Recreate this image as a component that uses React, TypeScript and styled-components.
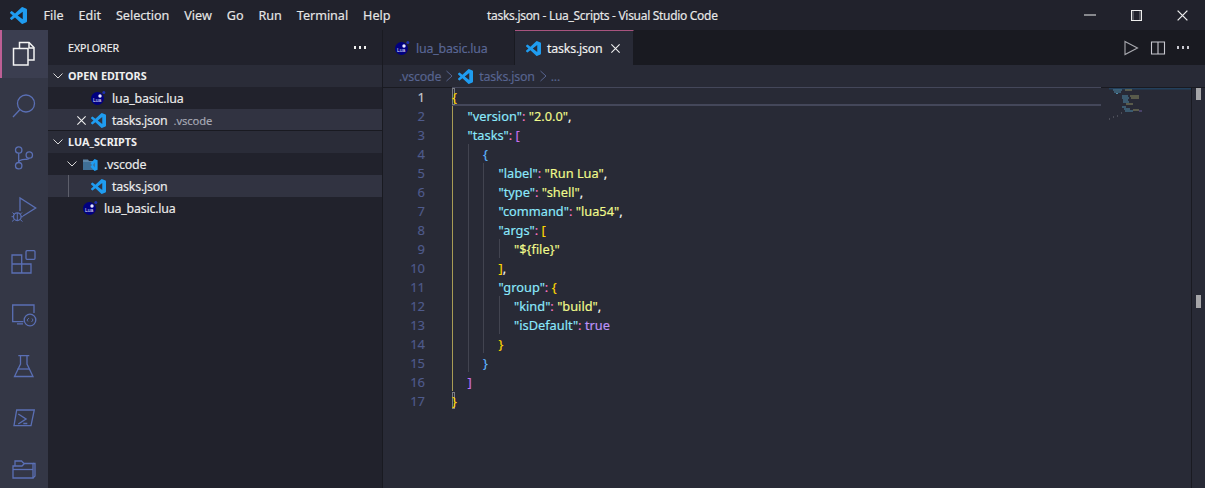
import React from "react";
import styled, { createGlobalStyle } from "styled-components";

const UI_FONT = `"Noto Sans", "Open Sans", sans-serif`;
const ICON_BLUE = "#5a6fb4";

const GlobalStyle = createGlobalStyle`
  html, body { margin: 0; padding: 0; height: 100%; background: #282a36; overflow: hidden; }
  #root { height: 100%; }
  * { box-sizing: border-box; }
`;

const Window = styled.div`
  width: 1205px;
  height: 488px;
  display: flex;
  flex-direction: column;
  font-family: ${UI_FONT};
  font-size: 13px;
  color: #f8f8f2;
  overflow: hidden;
  -webkit-text-stroke: 0.15px;
`;

const TitleBar = styled.header`
  height: 30px;
  flex: none;
  display: flex;
  align-items: center;
  background: #21222c;
  position: relative;
`;

const TitleLogo = styled.div`
  width: 36px;
  display: flex;
  justify-content: center;
`;

const Menu = styled.nav`
  display: flex;
`;

const MenuItem = styled.div`
  padding: 0 7.5px;
  font-size: 12.6px;
  letter-spacing: -0.03px;
  color: #e6e6e6;
`;

const WindowTitle = styled.div`
  position: absolute;
  left: 487px;
  font-size: 12px;
  letter-spacing: -0.3px;
  color: #e8e8e8;
  white-space: nowrap;
`;

const WindowControls = styled.div`
  margin-left: auto;
  display: flex;
`;

const WindowButton = styled.div`
  width: 46px;
  height: 30px;
  display: flex;
  align-items: center;
  justify-content: center;
`;

const Body = styled.div`
  flex: 1;
  display: flex;
  min-height: 0;
`;

const ActivityBar = styled.aside`
  width: 48px;
  flex: none;
  background: #343746;
  display: flex;
  flex-direction: column;
  gap: 4px;
  overflow: hidden;
`;

const ActivityItem = styled.div<{ $active?: boolean }>`
  height: 48px;
  flex: none;
  display: flex;
  align-items: center;
  justify-content: center;
  background: ${(p) => (p.$active ? "#3b3e50" : "transparent")};
  border-left: 2px solid ${(p) => (p.$active ? "#bd5f95" : "transparent")};
  padding-right: 2px;
`;

const SideBar = styled.aside`
  width: 335px;
  flex: none;
  background: #21222c;
  border-right: 1px solid #191a21;
  display: flex;
  flex-direction: column;
`;

const SideHeader = styled.div`
  height: 35px;
  flex: none;
  display: flex;
  align-items: center;
  justify-content: space-between;
  padding: 0 16px 0 20px;
  font-size: 10.6px;
  color: #f0f0f0;
`;

const Dots = styled.div`
  display: flex;
  gap: 2.5px;
`;

const Dot = styled.span<{ $color?: string }>`
  width: 2.5px;
  height: 2.5px;
  background: ${(p) => p.$color ?? "#f0f0f0"};
`;

const SectionHeader = styled.div`
  height: 22px;
  display: flex;
  align-items: center;
  background: #2a2c38;
  font-size: 10.8px;
  font-weight: 700;
  color: #f0f0f0;
  padding: 0 0 1px 4px;
  gap: 4px;
  -webkit-text-stroke: 0;
`;

const Row = styled.div<{ $indent: number; $selected?: boolean; $rule?: boolean }>`
  height: 22px;
  display: flex;
  align-items: center;
  position: relative;
  padding-left: ${(p) => p.$indent}px;
  background: ${(p) => (p.$selected ? "#313341" : "transparent")};
  box-shadow: ${(p) => (p.$rule ? "inset 0 -1px 0 #191a21" : "none")};
  white-space: nowrap;
`;

const RowLabel = styled.span`
  margin-left: 6px;
  font-size: 12.4px;
  letter-spacing: -0.2px;
  color: #ebebeb;
`;

const RowHint = styled.span`
  margin-left: 6px;
  font-size: 11.2px;
  letter-spacing: -0.1px;
  color: #a6a8b4;
`;

const TreeGuide = styled.span`
  position: absolute;
  left: 20px;
  top: 0;
  bottom: 0;
  width: 1px;
  background: #5d5f6b;
`;

const CloseSlot = styled.span`
  width: 18px;
  display: flex;
  justify-content: center;
  margin-right: 1px;
`;

const Twist = styled.span`
  width: 18px;
  display: flex;
  justify-content: center;
  padding-right: 2px;
`;

const EditorArea = styled.main`
  flex: 1;
  display: flex;
  flex-direction: column;
  background: #282a36;
  min-width: 0;
`;

const TabBar = styled.div`
  height: 35px;
  flex: none;
  display: flex;
  background: #191a21;
`;

const Tab = styled.div<{ $active?: boolean; $width: number }>`
  width: ${(p) => p.$width}px;
  height: 35px;
  display: flex;
  align-items: center;
  padding-left: 11px;
  background: ${(p) => (p.$active ? "#282a36" : "#21222c")};
  border-top: 1px solid ${(p) => (p.$active ? "#a8547f" : "transparent")};
  border-right: 1px solid #191a21;
`;

const TabLabel = styled.span<{ $active?: boolean }>`
  margin-left: 6px;
  font-size: 12.4px;
  letter-spacing: -0.2px;
  color: ${(p) => (p.$active ? "#f0f0f0" : "#5a6796")};
`;

const TabClose = styled.span<{ $width: number }>`
  width: ${(p) => p.$width}px;
  display: flex;
  justify-content: center;
`;

const TabActions = styled.div`
  margin-left: auto;
  display: flex;
  align-items: center;
  gap: 11px;
  padding-right: 16px;
`;

const Breadcrumbs = styled.div`
  height: 22px;
  flex: none;
  display: flex;
  align-items: center;
  padding-left: 16px;
  gap: 3px;
  font-size: 12.4px;
  letter-spacing: -0.2px;
  color: #57648f;
  box-shadow: 0 1px 0 #191a21;
`;

const CrumbIcon = styled.span`
  display: flex;
  margin: 0 3px 0 1px;
`;

const Code = styled.div`
  flex: 1;
  position: relative;
  min-height: 0;
`;

const Line = styled.div`
  height: 19px;
  display: flex;
  align-items: center;
  font-size: 12.8px;
  white-space: pre;
  position: relative;
`;

const CurrentLine = styled.span`
  position: absolute;
  left: 69px;
  top: 0;
  width: 649px;
  height: 19px;
  border-top: 1px solid #44475a;
  border-bottom: 2px solid #44475a;
`;

const LineNumber = styled.span<{ $current?: boolean }>`
  width: 42px;
  text-align: right;
  flex: none;
  font-size: 13px;
  color: ${(p) => (p.$current ? "#c9cad0" : "#4f5b8c")};
  margin-right: 27px;
`;

const Guide = styled.span<{ $active?: boolean }>`
  display: block;
  flex: none;
  width: 15.5px;
  height: 19px;
  border-left: 1px solid ${(p) => (p.$active ? "#a89c55" : "#424450")};
`;

const Tok = styled.span<{ $c: string }>`
  position: relative;
  color: ${(p) => p.$c};
`;

const Cursor = styled.span`
  position: absolute;
  left: 69px;
  top: 1px;
  width: 3px;
  height: 17px;
  border: 1px solid #7b7d85;
`;

const Minimap = styled.svg`
  position: absolute;
  right: 14px;
  top: 0;
`;

const ScrollTrack = styled.div`
  position: absolute;
  right: 0;
  top: 0;
  bottom: 0;
  width: 14px;
  border-left: 1px solid #191a21;
`;

const ScrollMark = styled.span<{ $top: number; $height: number }>`
  position: absolute;
  left: 4px;
  width: 5px;
  top: ${(p) => p.$top}px;
  height: ${(p) => p.$height}px;
  background: #a5a5a8;
`;

function VsLogo({ size = 15 }: { size?: number }) {
  return (
    <svg width={size} height={size} viewBox="0 0 24 24">
      <path
        fill="#1f9cf0"
        d="M23.15 2.587 18.21.21a1.494 1.494 0 0 0-1.705.29l-9.46 8.63-4.12-3.128a.999.999 0 0 0-1.276.057L.327 7.261A1 1 0 0 0 .326 8.74L3.899 12 .326 15.26a1 1 0 0 0 .001 1.479L1.65 17.94a.999.999 0 0 0 1.276.057l4.12-3.128 9.46 8.63a1.492 1.492 0 0 0 1.704.29l4.942-2.377A1.5 1.5 0 0 0 24 20.06V3.939a1.5 1.5 0 0 0-.85-1.352zm-5.146 14.861L10.826 12l7.178-5.448v10.896z"
      />
    </svg>
  );
}

function LuaIcon() {
  return (
    <svg width="16" height="16" viewBox="0 0 16 16">
      <circle cx="7.5" cy="8.5" r="6.5" fill="#000080" />
      <circle cx="10" cy="6" r="1.7" fill="#e8e8ff" />
      <circle cx="13.8" cy="2.4" r="1.5" fill="#2030b0" />
      <text x="3" y="11.5" fontSize="5" fill="#e8e8ff" stroke="none" fontFamily="Liberation Sans, sans-serif">
        Lua
      </text>
    </svg>
  );
}

function FolderIcon() {
  return (
    <svg width="16" height="14" viewBox="0 0 16 14">
      <path fill="#5d86a8" d="M1 2.5h5l1 1.5h7v9H1z" />
      <path fill="#3f6f96" d="M1 5h13v8H1z" />
      <path
        fill="#1f9cf0"
        d="M8.5 6.200 12.600 2 15.600 3.200V12.800L12.600 14 8.500 9.800 10 8zM12.800 5.500 11 8l1.800 2.500z"
      />
    </svg>
  );
}

function X({ size = 12, color = "#eee" }: { size?: number; color?: string }) {
  return (
    <svg width={size} height={size} viewBox="0 0 12 12">
      <path d="M1.5 1.5 10.5 10.5M10.5 1.5 1.5 10.5" stroke={color} strokeWidth="1.2" fill="none" />
    </svg>
  );
}

function Chevron({ color = "#d8d8d8" }: { color?: string }) {
  return (
    <svg width="12" height="8" viewBox="0 0 12 8">
      <path d="M1.5 1.5 6 6l4.5-4.5" stroke={color} strokeWidth="1" fill="none" />
    </svg>
  );
}

function Sep() {
  return (
    <svg width="10" height="12" viewBox="0 0 10 12">
      <path d="M2.5 1 8 6l-5.500 5" stroke="#57648f" strokeWidth="1" fill="none" />
    </svg>
  );
}

function ActivityIcon({
  children,
  color = ICON_BLUE,
  weight = 1.3,
}: {
  children: React.ReactNode;
  color?: string;
  weight?: number;
}) {
  return (
    <svg width="30" height="30" viewBox="0 0 30 30" fill="none" stroke={color} strokeWidth={weight}>
      {children}
    </svg>
  );
}

type Part = [string, string];
const KEY = "#8be9fd";
const STR = "#f1fa8c";
const PUN = "#ff79c6";
const YEL = "#ffd700";
const MAG = "#c870f0";
const BLU = "#5fb6ff";
const BOOL = "#bd93f9";
const COM = "#f8f8f2";

const LINES: { guides: number; parts: Part[] }[] = [
  { guides: 0, parts: [[YEL, "{"]] },
  { guides: 1, parts: [[KEY, '"version"'], [PUN, ": "], [STR, '"2.0.0"'], [COM, ","]] },
  { guides: 1, parts: [[KEY, '"tasks"'], [PUN, ": "], [MAG, "["]] },
  { guides: 2, parts: [[BLU, "{"]] },
  { guides: 3, parts: [[KEY, '"label"'], [PUN, ": "], [STR, '"Run Lua"'], [COM, ","]] },
  { guides: 3, parts: [[KEY, '"type"'], [PUN, ": "], [STR, '"shell"'], [COM, ","]] },
  { guides: 3, parts: [[KEY, '"command"'], [PUN, ": "], [STR, '"lua54"'], [COM, ","]] },
  { guides: 3, parts: [[KEY, '"args"'], [PUN, ": "], [YEL, "["]] },
  { guides: 4, parts: [[STR, '"${file}"']] },
  { guides: 3, parts: [[YEL, "]"], [COM, ","]] },
  { guides: 3, parts: [[KEY, '"group"'], [PUN, ": "], [YEL, "{"]] },
  { guides: 4, parts: [[KEY, '"kind"'], [PUN, ": "], [STR, '"build"'], [COM, ","]] },
  { guides: 4, parts: [[KEY, '"isDefault"'], [PUN, ": "], [BOOL, "true"]] },
  { guides: 3, parts: [[YEL, "}"]] },
  { guides: 2, parts: [[BLU, "}"]] },
  { guides: 1, parts: [[MAG, "]"]] },
  { guides: 0, parts: [[YEL, "}"]] },
];

const MENU = ["File", "Edit", "Selection", "View", "Go", "Run", "Terminal", "Help"];

export default function App() {
  return (
    <>
      <GlobalStyle />
      <Window>
        <TitleBar>
          <TitleLogo>
            <VsLogo size={17} />
          </TitleLogo>
          <Menu>
            {MENU.map((m) => (
              <MenuItem key={m}>{m}</MenuItem>
            ))}
          </Menu>
          <WindowTitle>tasks.json - Lua_Scripts - Visual Studio Code</WindowTitle>
          <WindowControls>
            <WindowButton>
              <svg width="12" height="2" viewBox="0 0 12 2">
                <path d="M0 1h12" stroke="#eee" strokeWidth="1" />
              </svg>
            </WindowButton>
            <WindowButton>
              <svg width="11" height="11" viewBox="0 0 11 11">
                <rect x="0.5" y="0.5" width="10" height="10" stroke="#eee" fill="none" />
                <path d="M2 0.5V10.5M9 0.5V10.5" stroke="#eee" strokeWidth="0.5" />
              </svg>
            </WindowButton>
            <WindowButton>
              <X size={13} />
            </WindowButton>
          </WindowControls>
        </TitleBar>
        <Body>
          <ActivityBar>
            <ActivityItem $active>
              <ActivityIcon color="#f4f4f4" weight={1.5}>
                <path d="M10.5 9V3.500h9.500l5 5V21h-6" />
                <path d="M20 3.500V9h5" />
                <path d="M4.500 9.500h14.500V26H4.500z" />
              </ActivityIcon>
            </ActivityItem>
            <ActivityItem>
              <ActivityIcon>
                <circle cx="17" cy="12.5" r="8.5" />
                <path d="M11 18.5 4 26" />
              </ActivityIcon>
            </ActivityItem>
            <ActivityItem>
              <ActivityIcon>
                <circle cx="9.7" cy="7" r="3.2" />
                <circle cx="9.7" cy="22.7" r="3.2" />
                <circle cx="20.3" cy="12" r="3.2" />
                <path d="M9.7 10.200v9.300M9.700 19c1-4 9.500-1.500 10.300-3.800" />
              </ActivityIcon>
            </ActivityItem>
            <ActivityItem>
              <ActivityIcon>
                <path d="M11 16V3l15.700 10L14 21" />
                <circle cx="8.3" cy="21.7" r="3.8" />
                <path
                  d="M8.300 18v7.500M3.500 17.500l2 2M13 17.500l-2 2M2.500 21.700H4.500M12 21.700h2M3 26.500l2.300-2M13.500 26.500l-2.300-2"
                  strokeWidth="1"
                />
              </ActivityIcon>
            </ActivityItem>
            <ActivityItem>
              <ActivityIcon>
                <path d="M3 8h9.700v18H3zM3 17h19v9h-9.300" />
                <rect x="17" y="3.7" width="9" height="8.6" rx="1" />
              </ActivityIcon>
            </ActivityItem>
            <ActivityItem>
              <ActivityIcon>
                <path d="M25 14V6H3.700v16.700H14.500M8 24.800h6" />
                <circle cx="21" cy="21" r="5.8" />
                <path d="m20 19-2 2 1 1.500M22.500 23l1.500-2-1-1.500" strokeWidth="0.9" />
              </ActivityIcon>
            </ActivityItem>
            <ActivityItem>
              <ActivityIcon>
                <path d="M9.300 4.700h11M11.500 4.700V13L5.500 25.500h18.500L18 13V4.700" />
                <path d="M8.500 18h12" />
              </ActivityIcon>
            </ActivityItem>
            <ActivityItem>
              <ActivityIcon>
                <path d="M7.700 7h17.600L22 22.700H5z" />
                <path d="m9.300 11 7.700 5-7.700 5M14.300 20.500h4" strokeWidth="1.4" />
              </ActivityIcon>
            </ActivityItem>
            <ActivityItem>
              <ActivityIcon>
                <path d="M4 11h9l2.500-2.500H24V23H4z" />
                <path d="M4 14.500h20" />
                <path d="M6 11V6h6.500l2.500 2.500M24 8.500h2V21l-2 2" />
              </ActivityIcon>
            </ActivityItem>
          </ActivityBar>
          <SideBar>
            <SideHeader>
              EXPLORER
              <Dots>
                <Dot />
                <Dot />
                <Dot />
              </Dots>
            </SideHeader>
            <SectionHeader>
              <Chevron />
              OPEN EDITORS
            </SectionHeader>
            <Row $indent={42}>
              <LuaIcon />
              <RowLabel>lua_basic.lua</RowLabel>
            </Row>
            <Row $indent={24} $selected $rule>
              <CloseSlot>
                <X size={11} />
              </CloseSlot>
              <VsLogo />
              <RowLabel>tasks.json</RowLabel>
              <RowHint>.vscode</RowHint>
            </Row>
            <SectionHeader>
              <Chevron />
              LUA_SCRIPTS
            </SectionHeader>
            <Row $indent={16}>
              <Twist>
                <Chevron />
              </Twist>
              <FolderIcon />
              <RowLabel>.vscode</RowLabel>
            </Row>
            <Row $indent={43} $selected>
              <TreeGuide />
              <VsLogo />
              <RowLabel>tasks.json</RowLabel>
            </Row>
            <Row $indent={34}>
              <LuaIcon />
              <RowLabel>lua_basic.lua</RowLabel>
            </Row>
          </SideBar>
          <EditorArea>
            <TabBar>
              <Tab $width={132}>
                <LuaIcon />
                <TabLabel>lua_basic.lua</TabLabel>
              </Tab>
              <Tab $active $width={119}>
                <VsLogo />
                <TabLabel $active>tasks.json</TabLabel>
                <TabClose $width={26}>
                  <X size={11} />
                </TabClose>
              </Tab>
              <TabActions>
                <svg width="16" height="16" viewBox="0 0 16 16" fill="none" stroke="#a9aab0" strokeWidth="1.1">
                  <path d="M2 1.500 14.500 8 2 14.500z" />
                </svg>
                <svg width="16" height="16" viewBox="0 0 16 16" fill="none" stroke="#c8c8d0" strokeWidth="1.1">
                  <path d="M1.500 2h13v12h-13zM8 2v12" />
                </svg>
                <Dots>
                  <Dot $color="#c8c8d0" />
                  <Dot $color="#c8c8d0" />
                  <Dot $color="#c8c8d0" />
                </Dots>
              </TabActions>
            </TabBar>
            <Breadcrumbs>
              .vscode
              <Sep />
              <CrumbIcon>
                <VsLogo />
              </CrumbIcon>
              tasks.json
              <Sep />
              ...
            </Breadcrumbs>
            <Code>
              {LINES.map((line, i) => {
                const guides = Array.from({ length: line.guides });
                return (
                  <Line key={i}>
                    {i === 0 && <CurrentLine />}
                    {(i === 0 || i === 16) && <Cursor />}
                    <LineNumber $current={i === 0}>{i + 1}</LineNumber>
                    {guides.map((_, g) => (
                      <Guide key={g} $active={g === 0} />
                    ))}
                    {line.parts.map(([c, t], k) => (
                      <Tok key={k} $c={c}>
                        {t}
                      </Tok>
                    ))}
                  </Line>
                );
              })}
              <Minimap width="86" height="40" viewBox="0 0 86 40">
                <rect x="4" y="1" width="82" height="1.5" fill="#23405c" />
                <path d="M8 3h9M9 5h7M11 6.500h2" stroke="#4f8aa8" strokeWidth="1" />
                <path d="M20 3h7" stroke="#8b8c60" strokeWidth="1" />
                <path d="M17 9h6M17 11h7M18 13h5M18 15h6" stroke="#4f8aa8" strokeWidth="1" />
                <path d="M25 9h9M26 11h8M21 17h7" stroke="#8b8c60" strokeWidth="1" />
                <path d="M17 20h4M19 22h6M20 24h8" stroke="#4f8aa8" strokeWidth="1" />
                <path d="M28 23h6" stroke="#8b8c60" strokeWidth="1" />
                <path d="M34 24h3" stroke="#6a5a9c" strokeWidth="1" />
                <path d="M4 32h1M8 30h1M12 29h1M16 26h1" stroke="#6c6e78" strokeWidth="1" />
              </Minimap>
              <ScrollTrack>
                <ScrollMark $top={1} $height={12} />
                <ScrollMark $top={208} $height={13} />
              </ScrollTrack>
            </Code>
          </EditorArea>
        </Body>
      </Window>
    </>
  );
}
